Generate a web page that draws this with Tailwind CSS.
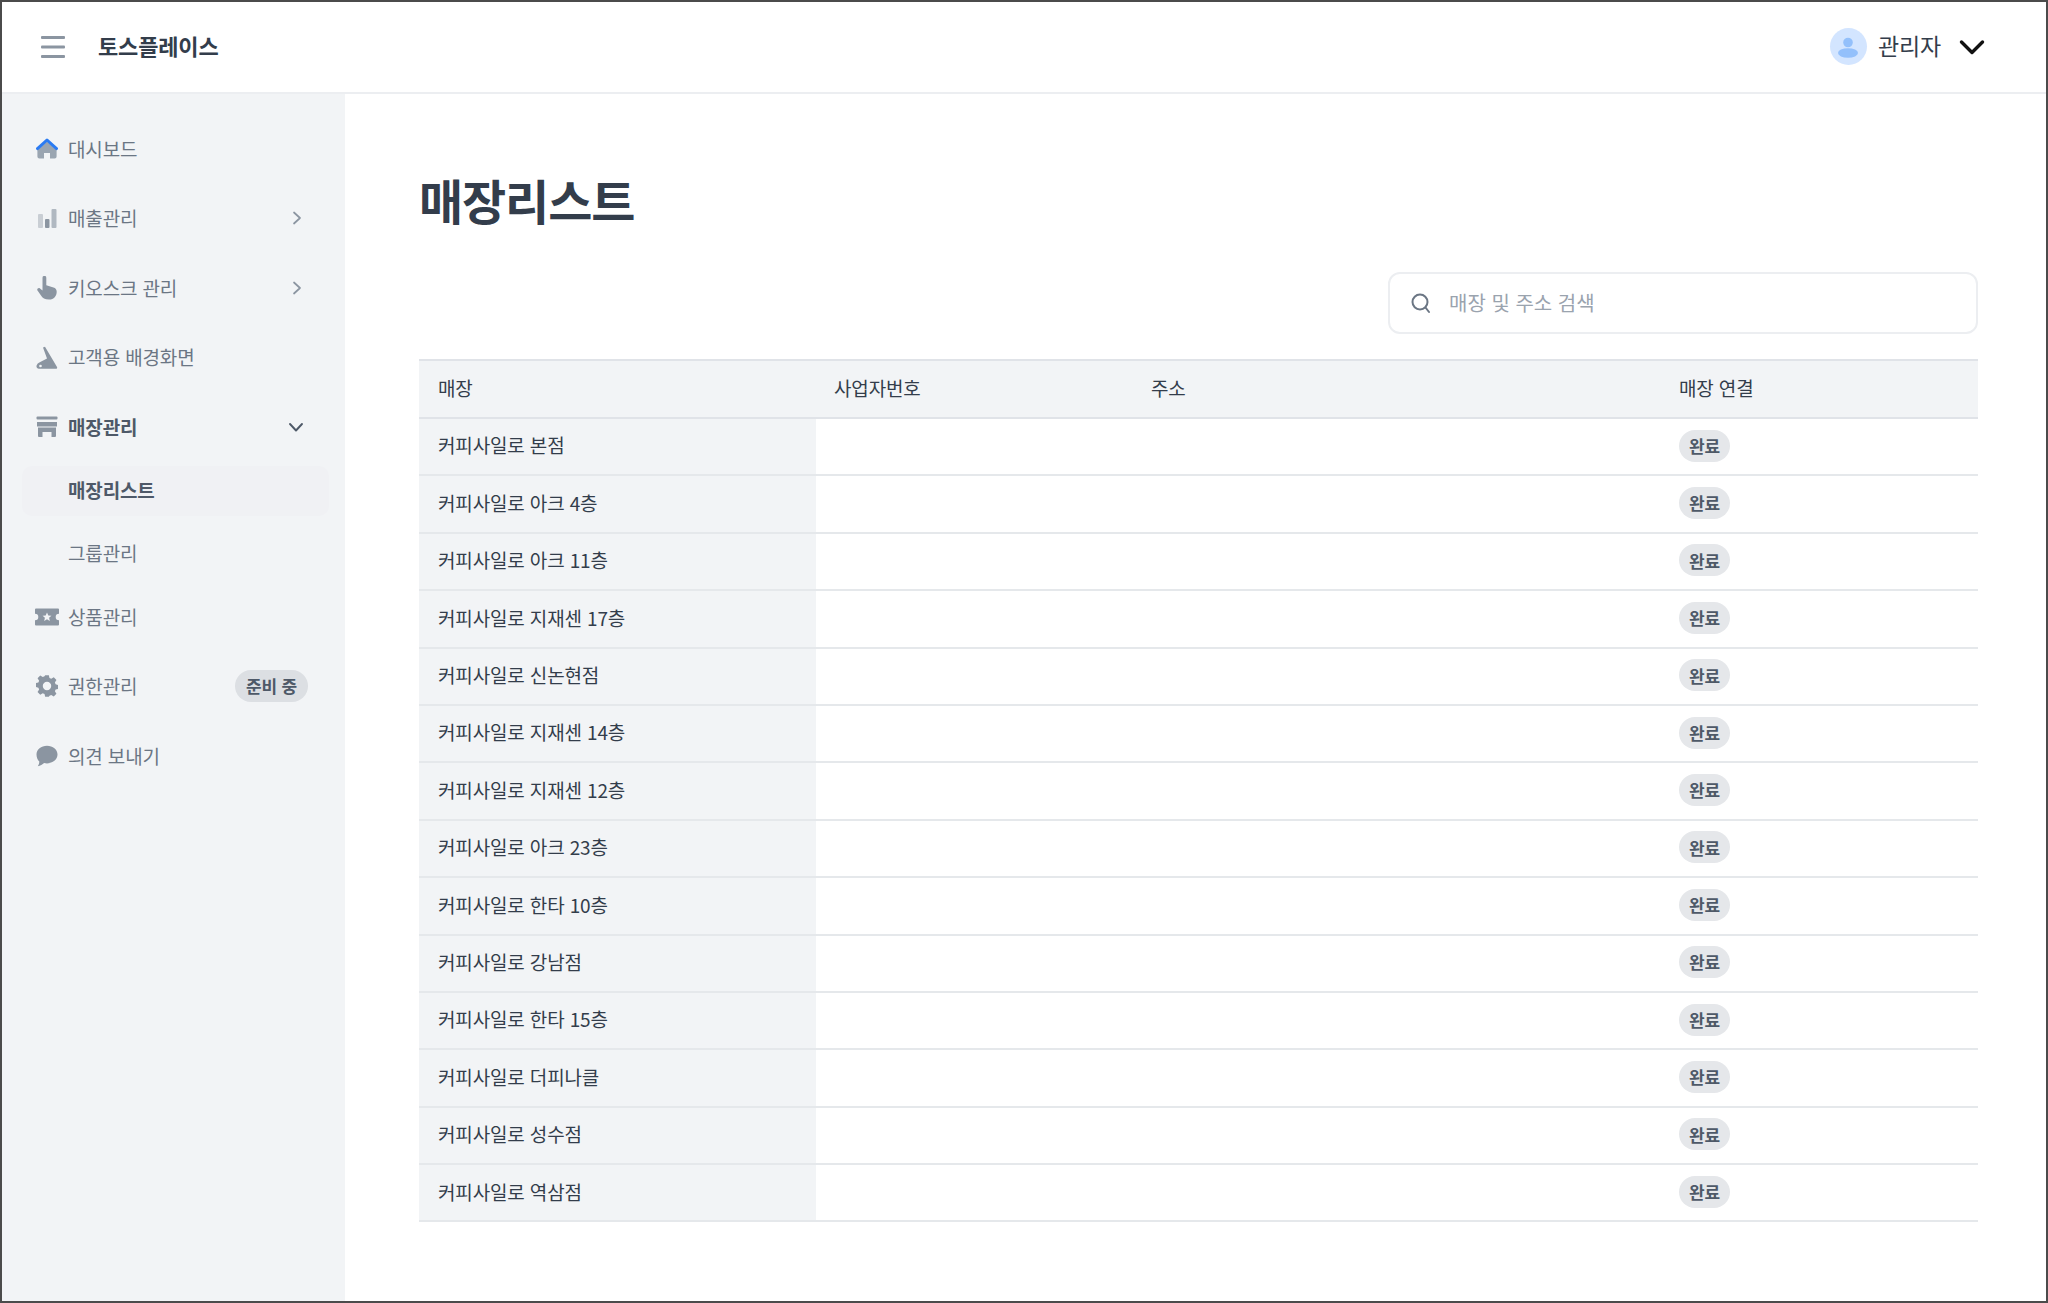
<!DOCTYPE html>
<html lang="ko"><head><meta charset="utf-8"><script src="https://cdn.jsdelivr.net/npm/@tailwindcss/browser@4"></script></head>
<body class="m-0 bg-white">
<div class="w-[2048px] h-[1303px] box-border border-2 border-[#4b4b4b] flex flex-col overflow-hidden font-['Noto_Sans_CJK_KR','Noto_Sans',sans-serif] text-[#333d4b] tracking-[-0.15px]">
  <header class="h-[90px] shrink-0 border-b-2 border-[#eceef1] box-content flex items-center bg-white">
    <svg class="ml-[38px] w-[26px] h-[24px]" viewBox="0 0 26 24" fill="#8b95a1"><rect x="1" y="1" width="24" height="3" rx="1"/><rect x="1" y="10.5" width="24" height="3" rx="1"/><rect x="1" y="20" width="24" height="3" rx="1"/></svg>
    <div class="ml-[32px] pb-[3px] text-[22px] font-bold text-[#333d4b]">토스플레이스</div>
    <div class="ml-auto flex items-center">
      <div class="w-[37px] h-[37px] -mt-[1px] rounded-full bg-[#d3e5ff] flex items-center justify-center">
        <svg class="w-[24px] h-[24px]" viewBox="0 0 24 24" fill="#93c0fb"><circle cx="12" cy="7.5" r="4.8"/><ellipse cx="12" cy="18" rx="10" ry="4.8"/></svg>
      </div>
      <div class="ml-[11px] pb-[3px] text-[23px] text-[#333d4b]">관리자</div>
      <svg class="ml-[18px] mr-[61px] w-[26px] h-[18px]" viewBox="0 0 26 18" fill="none" stroke="#111" stroke-width="3.4" stroke-linecap="round" stroke-linejoin="round"><path d="M2.5 4l10.5 10.5L23.5 4"/></svg>
    </div>
  </header>
  <div class="flex flex-1 min-h-0">
    <aside class="w-[343px] shrink-0 bg-[#f2f4f6] pt-[20px] text-[19px] text-[#6b7684]">
      <div class="h-[69.6px] flex items-center pl-[34px]">
        <svg class="w-[22px] h-[22px]" viewBox="0 0 22 22"><path d="M11 3.6L20.6 12v6.5a2 2 0 0 1-2 2H14v-5.5H8v5.5H3.4a2 2 0 0 1-2-2V12z" fill="#9aa5b1"/><path d="M1.5 10.6L11 2l9.500 8.600" fill="none" stroke="#2b7bf2" stroke-width="3" stroke-linecap="round" stroke-linejoin="round"/></svg>
        <span class="ml-[10px]">대시보드</span>
      </div>
      <div class="h-[69.600px] flex items-center pl-[34px]">
        <svg class="w-[22px] h-[22px]" viewBox="0 0 22 22"><rect x="2" y="7" width="5" height="14" rx="1" fill="#c9ced4"/><rect x="9" y="12" width="4.500" height="9" rx="1" fill="#8b95a1"/><rect x="15.500" y="2" width="5" height="19" rx="1" fill="#b0b8c1"/></svg>
        <span class="ml-[10px]">매출관리</span>
        <svg class="ml-auto mr-[43px] w-[10px] h-[14px]" viewBox="0 0 10 14" fill="none" stroke="#8b95a1" stroke-width="1.700" stroke-linecap="round" stroke-linejoin="round"><path d="M2 1.500L8 7 2 12.500"/></svg>
      </div>
      <div class="h-[69.600px] flex items-center pl-[34px]">
        <svg class="w-[22px] h-[24px]" viewBox="0 0 22 24" fill="#8b95a1"><path d="M6.500 1.800a1.900 1.900 0 0 1 3.800 0v7.500l7.200 2.200c2 .6 3.200 2 3.200 4.200C20.700 20 18 23.500 13 23.500c-4.200 0-6.500-1.500-8-4L1.500 14.500c-1-1.500 1-3.200 2.500-2l2.500 2z"/></svg>
        <span class="ml-[10px]">키오스크 관리</span>
        <svg class="ml-auto mr-[43px] w-[10px] h-[14px]" viewBox="0 0 10 14" fill="none" stroke="#8b95a1" stroke-width="1.700" stroke-linecap="round" stroke-linejoin="round"><path d="M2 1.500L8 7 2 12.500"/></svg>
      </div>
      <div class="h-[69.600px] flex items-center pl-[34px]">
        <svg class="w-[22px] h-[24px]" viewBox="0 0 22 24"><path d="M7 1.500L9 .8 21 21a1.200 1.200 0 0 1-1 1.800H3a2.500 2.500 0 0 1-2.300-3.500 5 5 0 0 1 2.600-2.700L11 12.500z" fill="#8b95a1"/><circle cx="4.500" cy="20" r="1.300" fill="#f2f4f6"/></svg>
        <span class="ml-[10px]">고객용 배경화면</span>
      </div>
      <div class="h-[69.600px] flex items-center pl-[34px] text-[#4e5968] font-bold">
        <svg class="w-[22px] h-[22px]" viewBox="0 0 22 22" fill="#8b95a1"><rect x="0.500" y="0.500" width="21" height="3" rx="1"/><path d="M1 6h20v4.500H1zM2 11.500h18V20a1 1 0 0 1-1 1h-3.500v-5h-9v5H3a1 1 0 0 1-1-1z"/></svg>
        <span class="ml-[10px]">매장관리</span>
        <svg class="ml-auto mr-[41px] w-[16px] h-[12px]" viewBox="0 0 16 12" fill="none" stroke="#4e5968" stroke-width="1.900" stroke-linecap="round" stroke-linejoin="round"><path d="M2 3l6 6.500L14 3"/></svg>
      </div>
      <div class="mt-[4px] mx-[20px] w-[307px] h-[50px] rounded-[10px] bg-[#f0f1f4] flex items-center pl-[46px] pb-[1px] font-bold text-[#4e5968]">매장리스트</div>
      <div class="mt-[13px] h-[50px] flex items-center pl-[66px] pb-[1px]">그룹관리</div>
      <div class="mt-[3px] h-[69.600px] flex items-center pl-[34px]">
        <svg class="w-[24px] h-[18px] -ml-[1px] mr-[-1px]" viewBox="0 0 24 18" fill="#8b95a1"><path fill-rule="evenodd" d="M1 .5h22a1 1 0 0 1 1 1v4.200a3.300 3.300 0 0 0 0 6.600v4.200a1 1 0 0 1-1 1H1a1 1 0 0 1-1-1v-4.200a3.300 3.300 0 0 0 0-6.600V1.500a1 1 0 0 1 1-1zM12 4.500l1.300 2.900 3.100.3-2.300 2.100.7 3.100-2.800-1.600-2.800 1.600.7-3.100-2.300-2.100 3.100-.3z"/></svg>
        <span class="ml-[10px]">상품관리</span>
      </div>
      <div class="h-[69.600px] flex items-center pl-[34px]">
        <svg class="w-[22px] h-[24px]" viewBox="0 0 24 24" fill="#8b95a1"><path fill-rule="evenodd" d="M14 1l.7 3.200 1.900.8 2.800-1.700 2.900 3-1.700 2.800.8 1.900 3.100.7v4.200l-3.100.7-.8 1.900 1.700 2.800-2.900 3-2.800-1.700-1.900.8L14 24.500 10 24.500l-.7-3.100-1.900-.8-2.800 1.700-2.900-3 1.700-2.800-.8-1.900-3.100-.7V9.700l3.100-.7.8-1.900-1.700-2.800 2.900-3 2.800 1.700 1.900-.8L10 1zM12 8.200a4.600 4.600 0 1 0 0 9.200 4.600 4.600 0 0 0 0-9.200z" transform="translate(0 -.8)"/></svg>
        <span class="ml-[10px]">권한관리</span>
        <span class="ml-auto mr-[37px] h-[32px] w-[73px] rounded-full bg-[#dcdfe3] text-[#4e5968] font-semibold text-[17px] flex items-center justify-center pb-[1px]">준비 중</span>
      </div>
      <div class="h-[69.600px] flex items-center pl-[34px]">
        <svg class="w-[22px] h-[22px]" viewBox="0 0 22 22" fill="#8b95a1"><path d="M11 .8c5.800 0 10.500 3.900 10.500 8.800S16.800 18.400 11 18.400c-1 0-2-.1-2.900-.3-1.500 1.500-3.800 2.800-6.300 3.100 .9-1.100 1.500-2.700 1.500-4.600C1.600 15 .5 12.400 .5 9.600.5 4.700 5.200.8 11 .8z"/></svg>
        <span class="ml-[10px]">의견 보내기</span>
      </div>
    </aside>
    <main class="flex-1 min-w-0 pl-[74px]">
      <h1 class="mt-[69px] h-[74px] flex items-center text-[48px] leading-none font-bold text-[#333d4b] tracking-[-1.100px] pb-[2px]">매장리스트</h1>
      <div class="mt-[35px] w-[1559px] flex justify-end">
        <div class="w-[590px] h-[62px] box-border rounded-[12px] border-2 border-[#eceef1] flex items-center bg-white">
          <svg class="ml-[21px] w-[20px] h-[22px]" viewBox="0 0 20 22" fill="none" stroke="#6b7684" stroke-width="2" stroke-linecap="round"><circle cx="9" cy="10" r="7.500"/><path d="M14.500 15.500L18 20"/></svg>
          <span class="ml-[18px] text-[20px] tracking-[0] text-[#9aa3ae]">매장 및 주소 검색</span>
        </div>
      </div>
      <table class="mt-[25px] w-[1559px] table-fixed border-collapse text-[19px] text-[#333d4b]">
        <colgroup><col class="w-[397px]"><col class="w-[317px]"><col class="w-[528px]"><col class="w-[317px]"></colgroup>
        <thead>
          <tr class="h-[58px] bg-[#f2f4f6] border-y-2 border-[#e0e3e8] text-left">
            <th class="pl-[19px] pb-[2px] font-normal">매장</th><th class="pl-[18px] pb-[2px] font-normal">사업자번호</th><th class="pl-[18px] pb-[2px] font-normal">주소</th><th class="pl-[18px] pb-[2px] font-normal">매장 연결</th>
          </tr>
        </thead>
        <tbody>
          <tr class="h-[57.400px] border-b-2 border-[#e5e8eb]"><td class="pl-[19px] pb-[2px] bg-[#f2f4f6]">커피사일로 본점</td><td></td><td></td><td class="pl-[18px] pb-[2px]"><span class="inline-flex items-center justify-center w-[51px] h-[32px] rounded-full bg-[#e5e7ea] text-[17px] font-semibold text-[#4e5968]">완료</span></td></tr>
          <tr class="h-[57.400px] border-b-2 border-[#e5e8eb]"><td class="pl-[19px] pb-[2px] bg-[#f2f4f6]">커피사일로 아크 4층</td><td></td><td></td><td class="pl-[18px] pb-[2px]"><span class="inline-flex items-center justify-center w-[51px] h-[32px] rounded-full bg-[#e5e7ea] text-[17px] font-semibold text-[#4e5968]">완료</span></td></tr>
          <tr class="h-[57.400px] border-b-2 border-[#e5e8eb]"><td class="pl-[19px] pb-[2px] bg-[#f2f4f6]">커피사일로 아크 11층</td><td></td><td></td><td class="pl-[18px] pb-[2px]"><span class="inline-flex items-center justify-center w-[51px] h-[32px] rounded-full bg-[#e5e7ea] text-[17px] font-semibold text-[#4e5968]">완료</span></td></tr>
          <tr class="h-[57.400px] border-b-2 border-[#e5e8eb]"><td class="pl-[19px] pb-[2px] bg-[#f2f4f6]">커피사일로 지재센 17층</td><td></td><td></td><td class="pl-[18px] pb-[2px]"><span class="inline-flex items-center justify-center w-[51px] h-[32px] rounded-full bg-[#e5e7ea] text-[17px] font-semibold text-[#4e5968]">완료</span></td></tr>
          <tr class="h-[57.400px] border-b-2 border-[#e5e8eb]"><td class="pl-[19px] pb-[2px] bg-[#f2f4f6]">커피사일로 신논현점</td><td></td><td></td><td class="pl-[18px] pb-[2px]"><span class="inline-flex items-center justify-center w-[51px] h-[32px] rounded-full bg-[#e5e7ea] text-[17px] font-semibold text-[#4e5968]">완료</span></td></tr>
          <tr class="h-[57.400px] border-b-2 border-[#e5e8eb]"><td class="pl-[19px] pb-[2px] bg-[#f2f4f6]">커피사일로 지재센 14층</td><td></td><td></td><td class="pl-[18px] pb-[2px]"><span class="inline-flex items-center justify-center w-[51px] h-[32px] rounded-full bg-[#e5e7ea] text-[17px] font-semibold text-[#4e5968]">완료</span></td></tr>
          <tr class="h-[57.400px] border-b-2 border-[#e5e8eb]"><td class="pl-[19px] pb-[2px] bg-[#f2f4f6]">커피사일로 지재센 12층</td><td></td><td></td><td class="pl-[18px] pb-[2px]"><span class="inline-flex items-center justify-center w-[51px] h-[32px] rounded-full bg-[#e5e7ea] text-[17px] font-semibold text-[#4e5968]">완료</span></td></tr>
          <tr class="h-[57.400px] border-b-2 border-[#e5e8eb]"><td class="pl-[19px] pb-[2px] bg-[#f2f4f6]">커피사일로 아크 23층</td><td></td><td></td><td class="pl-[18px] pb-[2px]"><span class="inline-flex items-center justify-center w-[51px] h-[32px] rounded-full bg-[#e5e7ea] text-[17px] font-semibold text-[#4e5968]">완료</span></td></tr>
          <tr class="h-[57.400px] border-b-2 border-[#e5e8eb]"><td class="pl-[19px] pb-[2px] bg-[#f2f4f6]">커피사일로 한타 10층</td><td></td><td></td><td class="pl-[18px] pb-[2px]"><span class="inline-flex items-center justify-center w-[51px] h-[32px] rounded-full bg-[#e5e7ea] text-[17px] font-semibold text-[#4e5968]">완료</span></td></tr>
          <tr class="h-[57.400px] border-b-2 border-[#e5e8eb]"><td class="pl-[19px] pb-[2px] bg-[#f2f4f6]">커피사일로 강남점</td><td></td><td></td><td class="pl-[18px] pb-[2px]"><span class="inline-flex items-center justify-center w-[51px] h-[32px] rounded-full bg-[#e5e7ea] text-[17px] font-semibold text-[#4e5968]">완료</span></td></tr>
          <tr class="h-[57.400px] border-b-2 border-[#e5e8eb]"><td class="pl-[19px] pb-[2px] bg-[#f2f4f6]">커피사일로 한타 15층</td><td></td><td></td><td class="pl-[18px] pb-[2px]"><span class="inline-flex items-center justify-center w-[51px] h-[32px] rounded-full bg-[#e5e7ea] text-[17px] font-semibold text-[#4e5968]">완료</span></td></tr>
          <tr class="h-[57.400px] border-b-2 border-[#e5e8eb]"><td class="pl-[19px] pb-[2px] bg-[#f2f4f6]">커피사일로 더피나클</td><td></td><td></td><td class="pl-[18px] pb-[2px]"><span class="inline-flex items-center justify-center w-[51px] h-[32px] rounded-full bg-[#e5e7ea] text-[17px] font-semibold text-[#4e5968]">완료</span></td></tr>
          <tr class="h-[57.400px] border-b-2 border-[#e5e8eb]"><td class="pl-[19px] pb-[2px] bg-[#f2f4f6]">커피사일로 성수점</td><td></td><td></td><td class="pl-[18px] pb-[2px]"><span class="inline-flex items-center justify-center w-[51px] h-[32px] rounded-full bg-[#e5e7ea] text-[17px] font-semibold text-[#4e5968]">완료</span></td></tr>
          <tr class="h-[57.400px] border-b-2 border-[#e5e8eb]"><td class="pl-[19px] pb-[2px] bg-[#f2f4f6]">커피사일로 역삼점</td><td></td><td></td><td class="pl-[18px] pb-[2px]"><span class="inline-flex items-center justify-center w-[51px] h-[32px] rounded-full bg-[#e5e7ea] text-[17px] font-semibold text-[#4e5968]">완료</span></td></tr>
        </tbody>
      </table>
    </main>
  </div>
</div>
</body></html>
